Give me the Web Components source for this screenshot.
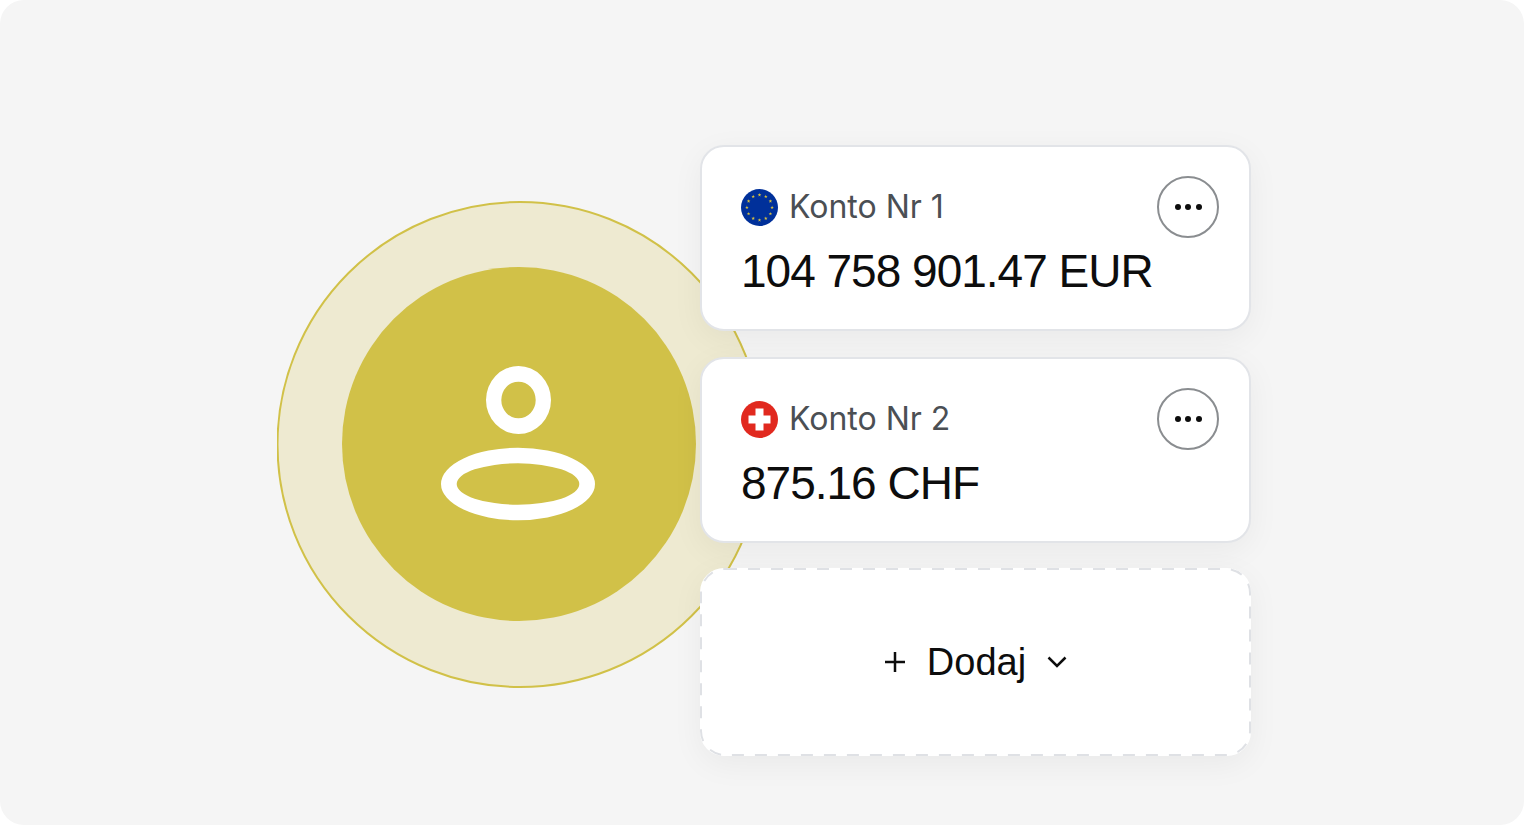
<!DOCTYPE html>
<html lang="pl"><head><meta charset="utf-8"><title>Konta</title>
<style>html,body{margin:0;padding:0;background:#fff}</style></head><body>
<app-panel>
  <avatar-badge slot="avatar"></avatar-badge>
  <account-card name="Konto Nr 1" amount="104 758 901.47 EUR" flag="eu"></account-card>
  <account-card name="Konto Nr 2" amount="875.16 CHF" flag="ch"></account-card>
  <add-card></add-card>
</app-panel>
<script>
const def=(n,html,extra)=>customElements.define(n,class extends HTMLElement{
  connectedCallback(){ if(this.shadowRoot) return; const s=this.attachShadow({mode:'open'}); s.innerHTML=typeof html==='function'?html(this):html; }
});
def('app-panel',`<style>
:host{display:block;position:relative;width:1524px;height:825px;background:#f5f5f5;border-radius:24px;overflow:hidden}
.stack{position:absolute;left:700px;top:145px;width:551px;display:flex;flex-direction:column;gap:26px}
</style><slot name="avatar"></slot><div class="stack"><slot></slot></div>`);
def('avatar-badge',`<style>
:host{position:absolute;left:277px;top:201px;width:486px;height:487px;display:block}
svg{display:block}
</style><svg width="486" height="487" viewBox="277 201 486 487">
<circle cx="520" cy="444.5" r="242.5" fill="#eeead1" stroke="#d1c148" stroke-width="2"/>
<circle cx="519" cy="444" r="177" fill="#d1c148"/>
<path fill="#fff" fill-rule="evenodd" d="M486 400a32.5 34 0 1 0 65 0a32.5 34 0 1 0-65 0ZM501.3 400a17.2 18.3 0 1 1 34.4 0a17.2 18.3 0 1 1-34.4 0Z"/>
<path fill="#fff" fill-rule="evenodd" d="M441 484a77 36.2 0 1 0 154 0a77 36.2 0 1 0-154 0ZM456.7 484a61.3 20.7 0 1 1 122.6 0a61.3 20.7 0 1 1-122.6 0Z"/>
</svg>`);
const stars=()=>{let o='';for(let i=0;i<12;i++){const a=i*Math.PI/6;const x=18.5+12.6*Math.sin(a),y=18.5-12.6*Math.cos(a);let p=[];for(let k=0;k<10;k++){const r=k%2?0.75:1.9,b=k*Math.PI/5;p.push((x+r*Math.sin(b)).toFixed(2)+','+(y-r*Math.cos(b)).toFixed(2));}o+=`<polygon points="${p.join(' ')}" fill="#d8c23f"/>`;}return o;};
const flags={eu:`<svg width="37" height="37" viewBox="0 0 37 37"><circle cx="18.5" cy="18.5" r="18.5" fill="#00309a"/>${stars()}</svg>`,
ch:`<svg width="37" height="37" viewBox="0 0 37 37"><circle cx="18.5" cy="18.5" r="18.5" fill="#e1291f"/><path fill="#fff" d="M14.5 7.500h8v7h7v8h-7v7h-8v-7h-7v-8h7z"/></svg>`};
def('account-card',el=>`<style>
:host{display:block;box-sizing:border-box;height:186px;background:#fff;border:2px solid #e2e4e8;border-radius:24px;box-shadow:0 8px 32px rgba(0,0,0,.05);padding:29px 30px 0 39px}
.top{display:flex;align-items:center;justify-content:space-between;height:62px}
.lab{display:flex;align-items:center;gap:11px;font:32px/1 Inter,sans-serif;color:#4b4f54}
svg{display:block}
.more{box-sizing:border-box;width:62px;height:62px;border-radius:50%;border:2px solid #8a8d90;display:flex;align-items:center;justify-content:center;gap:4.500px}
.more i{width:6px;height:6px;border-radius:50%;background:#0d0d0d}
.amt{font:46px/1 "Liberation Sans",sans-serif;letter-spacing:-1px;color:#0d0d0d;margin-top:10px}
</style><div class="top"><div class="lab">${flags[el.getAttribute('flag')]}<span>${el.getAttribute('name')}</span></div><div class="more"><i></i><i></i><i></i></div></div><div class="amt">${el.getAttribute('amount')}</div>`);
def('add-card',`<style>
:host{display:flex;position:relative;box-sizing:border-box;height:188px;margin-top:-1px;background:#fff;border-radius:24px;box-shadow:0 8px 32px rgba(0,0,0,.05);align-items:center;justify-content:center;gap:21px;font:38px/1 "Liberation Sans",sans-serif;color:#0d0d0d}
.b{position:absolute;inset:0;width:100%;height:100%}
svg{display:block}
</style><svg class="b" viewBox="0 0 551 188"><rect x="1" y="1" width="549" height="186" rx="24" fill="none" stroke="#dfe1e5" stroke-width="2" stroke-dasharray="12 11"/></svg>
<svg width="22" height="22" viewBox="0 0 22 22"><path d="M11 1v20M1 11h20" stroke="#0d0d0d" stroke-width="2.500" fill="none"/></svg>
<span>Dodaj</span>
<svg width="20" height="12" viewBox="0 0 20 12"><path d="M1.500 1.500 10 10l8.500-8.500" stroke="#0d0d0d" stroke-width="2.500" fill="none"/></svg>`);
</script></body></html>
